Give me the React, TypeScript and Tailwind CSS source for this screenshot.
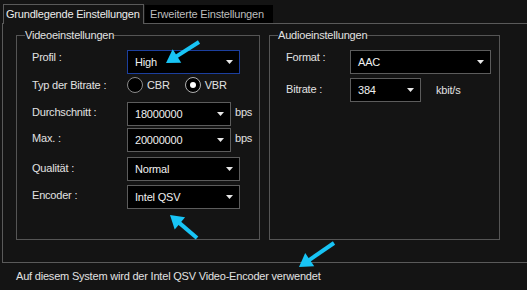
import React from "react";

type Pt = [number, number];

function Arrow({ tail, tip }: { tail: Pt; tip: Pt }) {
  const dx = tip[0] - tail[0];
  const dy = tip[1] - tail[1];
  const len = Math.hypot(dx, dy);
  const ux = dx / len;
  const uy = dy / len;
  const hl = 13;
  const hw = 8;
  const bx = tip[0] - ux * hl;
  const by = tip[1] - uy * hl;
  const pts = [
    `${tip[0]},${tip[1]}`,
    `${bx - uy * hw},${by + ux * hw}`,
    `${bx + uy * hw},${by - ux * hw}`,
  ].join(" ");
  return (
    <g>
      <line x1={tail[0]} y1={tail[1]} x2={bx + ux * 2} y2={by + uy * 2} stroke="#18c4f5" strokeWidth={4} />
      <polygon points={pts} fill="#18c4f5" />
    </g>
  );
}

function Select({ value, width, focused }: { value: string; width: string; focused?: boolean }) {
  return (
    <div
      className={`${width} h-[24px] shrink-0 bg-black border flex items-center justify-between pl-[7px] pr-[6px] ${
        focused ? "border-[#1c3f9e]" : "border-[#5c5c5c]"
      }`}
    >
      <span className="text-[#f0f0f0] leading-[14px]">{value}</span>
      <svg width="7" height="4" viewBox="0 0 7 4">
        <polygon points="0,0 7,0 3.5,4" fill="#e8e8e8" />
      </svg>
    </div>
  );
}

function Radio({ checked, label }: { checked?: boolean; label: string }) {
  return (
    <div className="flex items-center">
      <div
        className={`w-[16px] h-[16px] rounded-full bg-black border flex items-center justify-center ${
          checked ? "border-[#b0b0b0]" : "border-[#8a8a8a]"
        }`}
      >
        {checked && <div className="w-[6px] h-[6px] rounded-full bg-white" />}
      </div>
      <span className="ml-[4px] leading-[14px]">{label}</span>
    </div>
  );
}

export default function App() {
  return (
    <div className="relative w-[527px] h-[290px] overflow-hidden bg-[#141414] text-[#e2e2e2] text-[11px] tracking-[-0.2px] font-['Liberation_Sans',Arial,sans-serif]">
      {/* tabs */}
      <div className="flex items-end h-[23px] pl-[3px]">
        <div className="relative z-10 -mb-px h-[20px] w-[141px] bg-[#141414] border-l border-t border-r border-[#5a5a5a] pl-[2px] flex items-center text-[#ececec] whitespace-nowrap">
          Grundlegende Einstellungen
        </div>
        <div className="ml-[1px] h-[18px] w-[128px] bg-black pl-[5px] flex items-center text-[#bdbdbd] whitespace-nowrap">
          Erweiterte Einstellungen
        </div>
      </div>

      {/* panel */}
      <div className="ml-[2px] w-[580px] h-[240px] border border-[#5a5a5a]">
        <div className="flex pt-[4px] pl-[13px] gap-[9px]">
          <fieldset className="m-0 p-0 min-w-0 w-[244px] h-[212px] border border-[#555555]">
            <legend className="ml-[8px] p-0 leading-[14px]">Videoeinstellungen</legend>
            <div className="pl-[15px] pt-[8px] flex flex-col">
              <div className="flex items-start">
                <div className="w-[95px] leading-[14px]">Profil :</div>
                <Select value="High" width="w-[113px]" focused />
              </div>
              <div className="flex items-center mt-[3px] h-[16px]">
                <div className="w-[95px] leading-[14px]">Typ der Bitrate :</div>
                <div className="mr-[15px]">
                  <Radio label="CBR" />
                </div>
                <Radio label="VBR" checked />
              </div>
              <div className="flex items-start mt-[9px]">
                <div className="w-[95px] leading-[14px] pt-[3px]">Durchschnitt :</div>
                <Select value="18000000" width="w-[104px]" />
                <div className="ml-[4px] leading-[14px] pt-[3px]">bps</div>
              </div>
              <div className="flex items-start mt-[2px]">
                <div className="w-[95px] leading-[14px] pt-[3px]">Max. :</div>
                <Select value="20000000" width="w-[104px]" />
                <div className="ml-[4px] leading-[14px] pt-[3px]">bps</div>
              </div>
              <div className="flex items-start mt-[5px]">
                <div className="w-[95px] leading-[14px] pt-[4px]">Qualität :</div>
                <Select value="Normal" width="w-[113px]" />
              </div>
              <div className="flex items-start mt-[4px]">
                <div className="w-[95px] leading-[14px] pt-[3px]">Encoder :</div>
                <Select value="Intel QSV" width="w-[113px]" />
              </div>
            </div>
          </fieldset>

          <fieldset className="m-0 p-0 min-w-0 w-[231px] h-[212px] border border-[#555555]">
            <legend className="ml-[8px] p-0 leading-[14px]">Audioeinstellungen</legend>
            <div className="pl-[16px] pt-[8px] flex flex-col">
              <div className="flex items-start">
                <div className="w-[64px] leading-[14px]">Format :</div>
                <Select value="AAC" width="w-[141px]" />
              </div>
              <div className="flex items-start mt-[4px]">
                <div className="w-[64px] leading-[14px] pt-[4px]">Bitrate :</div>
                <Select value="384" width="w-[71px]" />
                <div className="ml-[15px] leading-[14px] pt-[5px]">kbit/s</div>
              </div>
            </div>
          </fieldset>
        </div>
      </div>

      <div className="mt-[6px] pl-[16px] leading-[14px]">
        Auf diesem System wird der Intel QSV Video-Encoder verwendet
      </div>

      <svg className="absolute inset-0 pointer-events-none" width="527" height="290">
        <Arrow tail={[199, 42]} tip={[166, 63]} />
        <Arrow tail={[197, 238]} tip={[170, 215]} />
        <Arrow tail={[334, 243]} tip={[299, 267]} />
      </svg>
    </div>
  );
}
